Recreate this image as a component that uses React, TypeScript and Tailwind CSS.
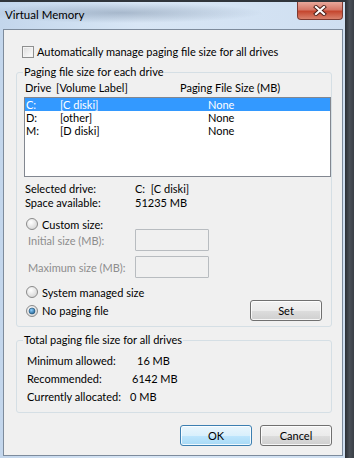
const font = "font-['Lato','Liberation_Sans',sans-serif]";

function Radio({ checked }: { checked?: boolean }) {
  return (
    <svg width="12" height="12" viewBox="0 0 12 12" className="shrink-0">
      <defs>
        <radialGradient id="rfill" cx="0.4" cy="0.35" r="0.7">
          <stop offset="0" stopColor="#ffffff" />
          <stop offset="1" stopColor="#d4d4d4" />
        </radialGradient>
        <radialGradient id="rdot" cx="0.4" cy="0.35" r="0.7">
          <stop offset="0" stopColor="#8fd0ff" />
          <stop offset="1" stopColor="#1b5c8c" />
        </radialGradient>
      </defs>
      <circle cx="6" cy="6" r="5.5" fill="url(#rfill)" stroke="#8a8a8a" />
      {checked && <circle cx="6" cy="6" r="3" fill="url(#rdot)" stroke="#1f4f76" strokeWidth="0.6" />}
    </svg>
  );
}

function WinButton({ label, isDefault }: { label: string; isDefault?: boolean }) {
  return (
    <div
      className={`w-[72px] h-[21px] flex items-center justify-center rounded-[3px] border text-[11px] shadow-[inset_0_0_0_1px_rgba(255,255,255,0.8)] ${
        isDefault
          ? "border-[#3c7fb1] bg-[linear-gradient(#eaf6fd_0%,#d9f0fc_50%,#bee6fd_51%,#a7d9f5_100%)]"
          : "border-[#707070] bg-[linear-gradient(#f2f2f2_0%,#ebebeb_50%,#dddddd_51%,#cfcfcf_100%)]"
      }`}
    >
      {label}
    </div>
  );
}

function SizeBox() {
  return <div className="w-[74px] h-[22px] border border-[#b8bcc0] bg-[#f0f0f0] rounded-[1px]" />;
}

export default function App() {
  return (
    <div className={`w-[354px] h-[458px] flex overflow-hidden bg-[#3a3e44] text-[11px] leading-none text-black ${font}`}>
      {/* window */}
      <div className="w-[345px] flex flex-col bg-[linear-gradient(90deg,#c3d6ec,#d8e6f5_40%,#cfdff1)]">
        <div className="h-[2px] bg-[#30353b]" />
        {/* title bar */}
        <div className="h-[27px] flex items-start bg-[radial-gradient(ellipse_at_35%_40%,rgba(110,130,155,0.45),transparent_45%)]">
          <span className="ml-[5px] mt-[7px] text-[11.5px] text-black">Virtual Memory</span>
          <div className="ml-auto mr-[2px] w-[46px] h-[18px] rounded-b-[4px] border border-t-0 border-[#7e3a30] bg-[linear-gradient(#e9a89b_0%,#d67767_45%,#c5472f_55%,#d9826d_100%)] flex items-center justify-center">
            <svg width="14" height="11" viewBox="0 0 14 11">
              <path d="M3 2 L11 9 M11 2 L3 9" stroke="#4a1d17" strokeWidth="4" strokeLinecap="square" />
              <path d="M3 2 L11 9 M11 2 L3 9" stroke="#ffffff" strokeWidth="2.2" strokeLinecap="square" />
            </svg>
          </div>
        </div>

        {/* client area */}
        <div className="flex-1 ml-[3px] mr-[2px] mb-[2px] border border-[#7d8b9c] bg-[#f0f0f0] flex flex-col">
          <div className="mt-[15px] h-[13px] flex items-center">
            <div className="ml-[18px] w-[12px] h-[12px] border border-[#8e8f8f] bg-[linear-gradient(135deg,#dcdcdc,#ffffff)] shadow-[inset_0_0_0_1px_#f4f4f4]" />
            <span className="ml-[3px]">Automatically manage paging file size for all drives</span>
          </div>

          {/* paging file size for each drive */}
          <fieldset className="mt-[6px] ml-[12px] w-[316px] border border-[#d5dfe5] rounded-[3px] pb-[5px] flex flex-col">
            <legend className="ml-[6px] px-[1px] h-[16px] leading-[16px]">Paging file size for each drive</legend>
            <div className="h-[14px] flex items-center pl-[8px]">
              <span className="w-[31px]">Drive</span>
              <span className="w-[124px]">[Volume Label]</span>
              <span>Paging File Size (MB)</span>
            </div>
            <div className="mt-[3px] ml-[7px] w-[307px] h-[80px] border border-[#828790] bg-white flex flex-col">
              {[
                ["C:", "[C diski]", "None", true],
                ["D:", "[other]", "None", false],
                ["M:", "[D diski]", "None", false],
              ].map(([d, l, s, sel]) => (
                <div key={d as string} className={`h-[13px] flex items-center pl-[1px] ${sel ? "bg-[#3399ff] text-white" : ""}`}>
                  <span className="w-[34px]">{d}</span>
                  <span className="w-[148px]">{l}</span>
                  <span>{s}</span>
                </div>
              ))}
            </div>
            <div className="mt-[4px] h-[14px] flex items-center pl-[8px]">
              <span className="w-[110px]">Selected drive:</span>
              <span>C:&nbsp;&nbsp;[C diski]</span>
            </div>
            <div className="h-[14px] flex items-center pl-[8px]">
              <span className="w-[110px]">Space available:</span>
              <span>51235 MB</span>
            </div>
            <div className="mt-[9px] h-[12px] flex items-center pl-[9px] gap-[4px]">
              <Radio />
              <span>Custom size:</span>
            </div>
            <div className="-mt-[1px] h-[22px] flex items-center pl-[11px] text-[#8d8d8d]">
              <span className="w-[107px]">Initial size (MB):</span>
              <SizeBox />
            </div>
            <div className="mt-[5px] h-[22px] flex items-center pl-[11px] text-[#8d8d8d]">
              <span className="w-[107px]">Maximum size (MB):</span>
              <SizeBox />
            </div>
            <div className="mt-[8px] h-[12px] flex items-center pl-[9px] gap-[4px]">
              <Radio />
              <span>System managed size</span>
            </div>
            <div className="mt-[2px] h-[21px] flex items-center pl-[9px] gap-[4px]">
              <Radio checked />
              <span>No paging file</span>
              <div className="ml-auto mr-[9px]">
                <WinButton label="Set" />
              </div>
            </div>
          </fieldset>

          {/* totals */}
          <fieldset className="mt-[5px] ml-[12px] w-[316px] border border-[#d5dfe5] rounded-[3px] pb-[7px] flex flex-col">
            <legend className="ml-[6px] px-[1px] h-[16px] leading-[16px]">Total paging file size for all drives</legend>
            <div className="mt-[3px] h-[18px] flex items-center pl-[10px]">
              <span className="w-[110px]">Minimum allowed:</span>
              <span>16 MB</span>
            </div>
            <div className="h-[18px] flex items-center pl-[10px]">
              <span className="w-[105px]">Recommended:</span>
              <span>6142 MB</span>
            </div>
            <div className="h-[18px] flex items-center pl-[10px]">
              <span className="w-[103px]">Currently allocated:</span>
              <span>0 MB</span>
            </div>
          </fieldset>

          <div className="mt-[12px] mr-[10px] flex justify-end gap-[8px]">
            <WinButton label="OK" isDefault />
            <WinButton label="Cancel" />
          </div>
        </div>
      </div>
      {/* desktop behind */}
      <div className="flex-1 bg-[linear-gradient(90deg,#2b2f35,#4a5058_50%,#3a3f46)]" />
    </div>
  );
}
